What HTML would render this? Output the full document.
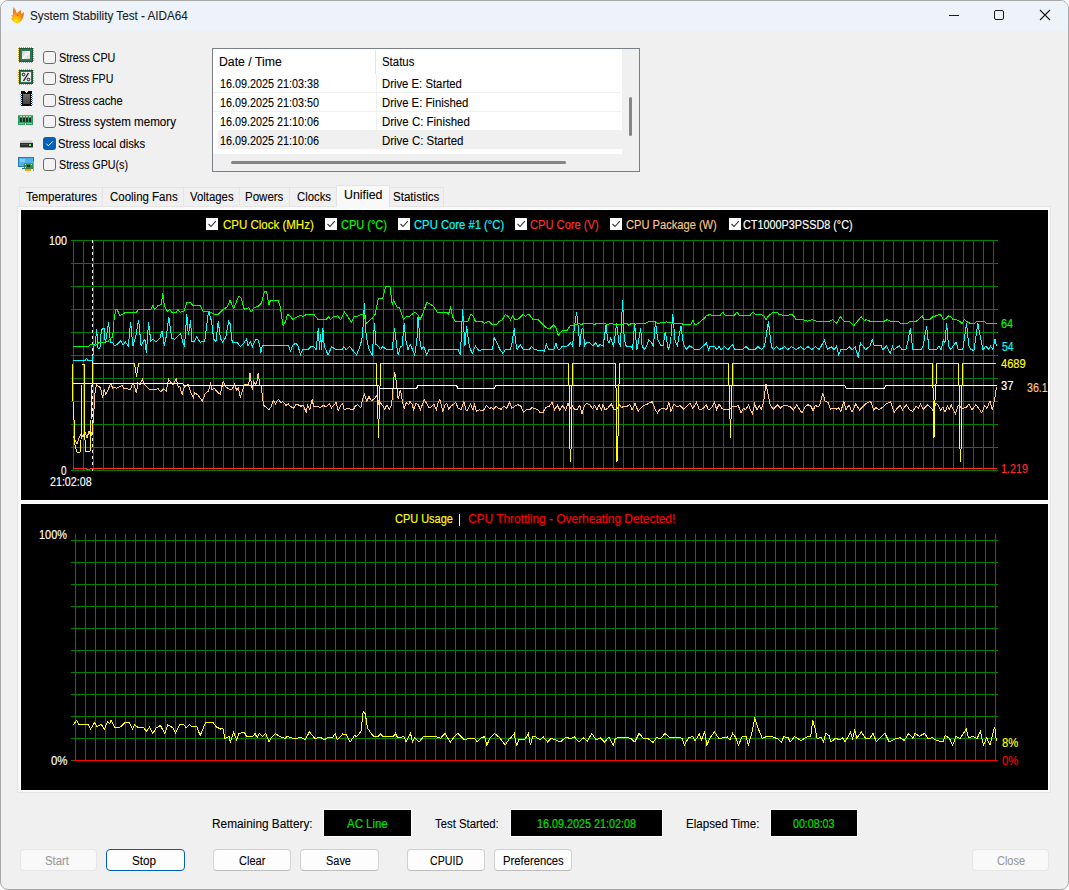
<!DOCTYPE html>
<html><head><meta charset="utf-8">
<style>
html,body{margin:0;padding:0;background:#fff;width:1069px;height:890px;overflow:hidden}
body{font-family:"Liberation Sans",sans-serif;color:#000}
.win{position:absolute;left:0;top:0;width:1069px;height:890px;box-sizing:border-box;border:1px solid #a9a9a9;border-radius:8px;background:#f0f0f0;overflow:hidden}
.in{position:absolute;left:-1px;top:-1px;width:1069px;height:890px}
.t{position:absolute;white-space:nowrap;line-height:1em;-webkit-text-stroke:0.1px currentColor}
.box{position:absolute;background:#000;color:#00e600;font-size:11.5px;display:flex;align-items:center;justify-content:center;box-shadow:0 0 0 1px #fff}
.btn{position:absolute;top:849px;height:22px;box-sizing:border-box;border:1px solid #d0d0d0;border-bottom-color:#bdbdbd;border-radius:4px;background:#fdfdfd;font-size:11.5px;display:flex;align-items:center;justify-content:center}
.btn.dis{background:#f9f9f9;border-color:#e6e6e6;color:#a0a0a0}
.btn.def{border:1.5px solid #005fb8;background:#fdfdfd}
</style></head><body>
<div class="win"><div class="in">
<div style="position:absolute;left:0;top:0;width:1069px;height:31px;background:#eef3f9"></div>
<svg style="position:absolute;left:10px;top:6px" width="16" height="18" viewBox="0 0 16 18">
<defs><radialGradient id="fl" cx="0.4" cy="0.85" r="0.6"><stop offset="0" stop-color="#ffee00"/><stop offset="0.35" stop-color="#ffc000"/><stop offset="0.7" stop-color="#f59020"/><stop offset="1" stop-color="#ec7a18"/></radialGradient></defs>
<path d="M3.5 1 C5 3 6 5 7 7.2 C8 6 9.5 5 10.6 3.8 C11 6 11.3 7 11.6 8.2 C12.3 7.4 13 6.8 14 6 C14 9 13.5 11.5 11.5 14.5 C10 16.5 8 17.5 6 17 C4 16.3 2.5 14.5 1.2 12.5 C1.5 12 2.2 11.5 3 11.2 C2.5 10.5 1.5 10 0.8 9.3 C1.5 9 2.5 9.2 3.2 9.5 C2.8 7 2.8 4 3.5 1 Z" fill="url(#fl)"/>
<circle cx="7.5" cy="9.5" r="0.7" fill="#ff3010"/>
</svg>
<div class="t" style="left:30.02px;top:10.20px;font-size:12px;color:#1b1b1b;transform:scaleX(0.9752);transform-origin:0 0;">System Stability Test - AIDA64</div>
<div style="position:absolute;left:949px;top:15px;width:10px;height:1px;background:#1a1a1a"></div>
<div style="position:absolute;left:994px;top:10px;width:10px;height:10px;box-sizing:border-box;border:1px solid #1a1a1a;border-radius:2px"></div>
<svg style="position:absolute;left:1039px;top:9px" width="12" height="12"><path d="M1 1L11 11M11 1L1 11" stroke="#1a1a1a" stroke-width="1.1"/></svg>
<div style="position:absolute;left:18px;top:47px;line-height:0"><svg width="16" height="16" shape-rendering="crispEdges"><rect x="0" y="0" width="16" height="16" fill="#fafafa"/><rect x="1" y="0" width="1" height="1" fill="#d4a020"/><rect x="1" y="15" width="1" height="1" fill="#d4a020"/><rect x="3" y="0" width="1" height="1" fill="#d4a020"/><rect x="3" y="15" width="1" height="1" fill="#d4a020"/><rect x="5" y="0" width="1" height="1" fill="#d4a020"/><rect x="5" y="15" width="1" height="1" fill="#d4a020"/><rect x="7" y="0" width="1" height="1" fill="#d4a020"/><rect x="7" y="15" width="1" height="1" fill="#d4a020"/><rect x="9" y="0" width="1" height="1" fill="#d4a020"/><rect x="9" y="15" width="1" height="1" fill="#d4a020"/><rect x="11" y="0" width="1" height="1" fill="#d4a020"/><rect x="11" y="15" width="1" height="1" fill="#d4a020"/><rect x="13" y="0" width="1" height="1" fill="#d4a020"/><rect x="13" y="15" width="1" height="1" fill="#d4a020"/><rect x="0" y="1" width="1" height="1" fill="#d4a020"/><rect x="15" y="1" width="1" height="1" fill="#d4a020"/><rect x="0" y="3" width="1" height="1" fill="#d4a020"/><rect x="15" y="3" width="1" height="1" fill="#d4a020"/><rect x="0" y="5" width="1" height="1" fill="#d4a020"/><rect x="15" y="5" width="1" height="1" fill="#d4a020"/><rect x="0" y="7" width="1" height="1" fill="#d4a020"/><rect x="15" y="7" width="1" height="1" fill="#d4a020"/><rect x="0" y="9" width="1" height="1" fill="#d4a020"/><rect x="15" y="9" width="1" height="1" fill="#d4a020"/><rect x="0" y="11" width="1" height="1" fill="#d4a020"/><rect x="15" y="11" width="1" height="1" fill="#d4a020"/><rect x="0" y="13" width="1" height="1" fill="#d4a020"/><rect x="15" y="13" width="1" height="1" fill="#d4a020"/><rect x="1" y="1" width="14" height="14" fill="#1f5a3a"/><rect x="2" y="2" width="12" height="12" fill="#2f7550"/><defs><linearGradient id="cg" x1="0" y1="0" x2="1" y2="1"><stop offset="0" stop-color="#c8c8c8"/><stop offset="0.5" stop-color="#f2f2f2"/><stop offset="1" stop-color="#d0d0d0"/></linearGradient></defs><rect x="4" y="4" width="8" height="8" fill="url(#cg)"/></svg></div>
<div style="position:absolute;left:43px;top:51px;width:13px;height:13px;box-sizing:border-box;border:1px solid #6a6a6a;border-radius:3px;background:#f3f3f3"></div>
<div class="t" style="left:58.50px;top:52.00px;font-size:12px;color:#000;transform:scaleX(0.9000);transform-origin:0 0;">Stress CPU</div>
<div style="position:absolute;left:18px;top:69px;line-height:0"><svg width="16" height="16" shape-rendering="crispEdges"><rect x="0" y="0" width="16" height="16" fill="#fafafa"/><rect x="1" y="0" width="1" height="1" fill="#d4a020"/><rect x="1" y="15" width="1" height="1" fill="#d4a020"/><rect x="3" y="0" width="1" height="1" fill="#d4a020"/><rect x="3" y="15" width="1" height="1" fill="#d4a020"/><rect x="5" y="0" width="1" height="1" fill="#d4a020"/><rect x="5" y="15" width="1" height="1" fill="#d4a020"/><rect x="7" y="0" width="1" height="1" fill="#d4a020"/><rect x="7" y="15" width="1" height="1" fill="#d4a020"/><rect x="9" y="0" width="1" height="1" fill="#d4a020"/><rect x="9" y="15" width="1" height="1" fill="#d4a020"/><rect x="11" y="0" width="1" height="1" fill="#d4a020"/><rect x="11" y="15" width="1" height="1" fill="#d4a020"/><rect x="13" y="0" width="1" height="1" fill="#d4a020"/><rect x="13" y="15" width="1" height="1" fill="#d4a020"/><rect x="0" y="1" width="1" height="1" fill="#d4a020"/><rect x="15" y="1" width="1" height="1" fill="#d4a020"/><rect x="0" y="3" width="1" height="1" fill="#d4a020"/><rect x="15" y="3" width="1" height="1" fill="#d4a020"/><rect x="0" y="5" width="1" height="1" fill="#d4a020"/><rect x="15" y="5" width="1" height="1" fill="#d4a020"/><rect x="0" y="7" width="1" height="1" fill="#d4a020"/><rect x="15" y="7" width="1" height="1" fill="#d4a020"/><rect x="0" y="9" width="1" height="1" fill="#d4a020"/><rect x="15" y="9" width="1" height="1" fill="#d4a020"/><rect x="0" y="11" width="1" height="1" fill="#d4a020"/><rect x="15" y="11" width="1" height="1" fill="#d4a020"/><rect x="0" y="13" width="1" height="1" fill="#d4a020"/><rect x="15" y="13" width="1" height="1" fill="#d4a020"/><rect x="1" y="1" width="14" height="14" fill="#1f5a3a"/><rect x="2" y="2" width="12" height="12" fill="#2f7550"/><rect x="3" y="3" width="10" height="10" fill="#e8e8e8"/><path d="M10.5 4L5.5 12" stroke="#111" stroke-width="1.3" shape-rendering="auto"/><circle cx="5.5" cy="5.5" r="1.3" fill="none" stroke="#111" stroke-width="1" shape-rendering="auto"/><circle cx="10.5" cy="10.5" r="1.3" fill="none" stroke="#111" stroke-width="1" shape-rendering="auto"/></svg></div>
<div style="position:absolute;left:43px;top:72px;width:13px;height:13px;box-sizing:border-box;border:1px solid #6a6a6a;border-radius:3px;background:#f3f3f3"></div>
<div class="t" style="left:58.51px;top:73.20px;font-size:12px;color:#000;transform:scaleX(0.8867);transform-origin:0 0;">Stress FPU</div>
<div style="position:absolute;left:20px;top:91px;line-height:0"><svg width="13" height="16" shape-rendering="crispEdges"><rect x="0" y="1" width="13" height="15" fill="#fafafa"/><path d="M1 0H5L6 2H7L8 0H12V15H1Z" fill="#0a0a0a"/><defs><linearGradient id="kg" x1="0" y1="0" x2="0" y2="1"><stop offset="0" stop-color="#707070"/><stop offset="1" stop-color="#404040"/></linearGradient></defs><rect x="3" y="3" width="7" height="10" fill="url(#kg)"/><rect x="0" y="3" width="1" height="1" fill="#8aa0c8"/><rect x="12" y="3" width="1" height="1" fill="#8aa0c8"/><rect x="1" y="3" width="1" height="1" fill="#fff"/><rect x="11" y="3" width="1" height="1" fill="#fff"/><rect x="0" y="5" width="1" height="1" fill="#8aa0c8"/><rect x="12" y="5" width="1" height="1" fill="#8aa0c8"/><rect x="1" y="5" width="1" height="1" fill="#fff"/><rect x="11" y="5" width="1" height="1" fill="#fff"/><rect x="0" y="7" width="1" height="1" fill="#8aa0c8"/><rect x="12" y="7" width="1" height="1" fill="#8aa0c8"/><rect x="1" y="7" width="1" height="1" fill="#fff"/><rect x="11" y="7" width="1" height="1" fill="#fff"/><rect x="0" y="9" width="1" height="1" fill="#8aa0c8"/><rect x="12" y="9" width="1" height="1" fill="#8aa0c8"/><rect x="1" y="9" width="1" height="1" fill="#fff"/><rect x="11" y="9" width="1" height="1" fill="#fff"/><rect x="0" y="11" width="1" height="1" fill="#8aa0c8"/><rect x="12" y="11" width="1" height="1" fill="#8aa0c8"/><rect x="1" y="11" width="1" height="1" fill="#fff"/><rect x="11" y="11" width="1" height="1" fill="#fff"/><rect x="0" y="13" width="1" height="1" fill="#8aa0c8"/><rect x="12" y="13" width="1" height="1" fill="#8aa0c8"/><rect x="1" y="13" width="1" height="1" fill="#fff"/><rect x="11" y="13" width="1" height="1" fill="#fff"/></svg></div>
<div style="position:absolute;left:43px;top:94px;width:13px;height:13px;box-sizing:border-box;border:1px solid #6a6a6a;border-radius:3px;background:#f3f3f3"></div>
<div class="t" style="left:58.47px;top:95.10px;font-size:12px;color:#000;transform:scaleX(0.9338);transform-origin:0 0;">Stress cache</div>
<div style="position:absolute;left:18px;top:115px;line-height:0"><svg width="15" height="10" shape-rendering="crispEdges"><rect x="0" y="0" width="15" height="10" fill="#2e9a60"/><rect x="0" y="0" width="15" height="1" fill="#48b078"/><rect x="2" y="1" width="2" height="1" fill="#b8e0a0"/><rect x="5" y="1" width="2" height="1" fill="#b8e0a0"/><rect x="8" y="1" width="2" height="1" fill="#b8e0a0"/><rect x="11" y="1" width="2" height="1" fill="#b8e0a0"/><rect x="2" y="3" width="2" height="4" fill="#2a2a2a"/><rect x="5" y="3" width="2" height="4" fill="#2a2a2a"/><rect x="8" y="3" width="2" height="4" fill="#2a2a2a"/><rect x="11" y="3" width="2" height="4" fill="#2a2a2a"/><rect x="1" y="8" width="5" height="1" fill="#f0a030"/><rect x="9" y="8" width="5" height="1" fill="#f0a030"/><rect x="7" y="8" width="1" height="2" fill="#f0f0f0"/></svg></div>
<div style="position:absolute;left:43px;top:115px;width:13px;height:13px;box-sizing:border-box;border:1px solid #6a6a6a;border-radius:3px;background:#f3f3f3"></div>
<div class="t" style="left:58.43px;top:115.90px;font-size:12px;color:#000;transform:scaleX(0.9669);transform-origin:0 0;">Stress system memory</div>
<div style="position:absolute;left:20px;top:140px;line-height:0"><svg width="13" height="8" shape-rendering="crispEdges"><defs><linearGradient id="dg" x1="0" y1="0" x2="0" y2="1"><stop offset="0" stop-color="#e4e4e4"/><stop offset="1" stop-color="#bdbdbd"/></linearGradient></defs><path d="M1 0H12L13 3H0Z" fill="url(#dg)"/><rect x="0" y="3" width="13" height="4" fill="#2c2c2c"/><rect x="1" y="4" width="7" height="1" fill="#505050"/><rect x="9" y="4" width="2" height="2" fill="#4cff4c"/><rect x="0" y="7" width="13" height="1" fill="#9a9a9a"/></svg></div>
<div style="position:absolute;left:43px;top:137px;width:13px;height:13px;box-sizing:border-box;border-radius:3px;background:#005fb8"></div>
<svg style="position:absolute;left:43px;top:137px" width="13" height="13"><path d="M3.2 6.6L5.4 8.8L9.8 4.4" stroke="#fff" stroke-width="1" fill="none"/></svg>
<div class="t" style="left:58.46px;top:137.80px;font-size:12px;color:#000;transform:scaleX(0.9391);transform-origin:0 0;">Stress local disks</div>
<div style="position:absolute;left:18px;top:157px;line-height:0"><svg width="17" height="15" shape-rendering="crispEdges"><rect x="0" y="0" width="16" height="10" fill="#2a78b0"/><rect x="1" y="1" width="14" height="8" fill="#4cb0ee"/><rect x="2" y="2" width="5" height="3" fill="#80ccf6"/><rect x="6" y="6" width="9" height="6" fill="#2f8a50"/><rect x="6" y="6" width="9" height="1" fill="#3fa060"/><rect x="9" y="8" width="3" height="2" fill="#222"/><rect x="7" y="7" width="1" height="1" fill="#ddd"/><rect x="13" y="7" width="1" height="1" fill="#ddd"/><rect x="7" y="10" width="1" height="1" fill="#ddd"/><rect x="7" y="12" width="6" height="2" fill="#f5a000"/><rect x="15" y="4" width="1" height="10" fill="#9a9a9a"/><rect x="4" y="11" width="2" height="1" fill="#3a5aa8"/></svg></div>
<div style="position:absolute;left:43px;top:158px;width:13px;height:13px;box-sizing:border-box;border:1px solid #6a6a6a;border-radius:3px;background:#f3f3f3"></div>
<div class="t" style="left:58.51px;top:159.00px;font-size:12px;color:#000;transform:scaleX(0.8921);transform-origin:0 0;">Stress GPU(s)</div>
<div style="position:absolute;left:212px;top:48px;width:428px;height:124px;box-sizing:border-box;border:1px solid #7a7f86;background:#f0f0f0"></div>
<div style="position:absolute;left:213px;top:49px;width:409px;height:105px;background:#fff"></div>
<div style="position:absolute;left:375px;top:50px;width:1px;height:24px;background:#e5e5e5"></div>
<div style="position:absolute;left:218px;top:130px;width:404px;height:19px;background:#f0f0f0"></div>
<div style="position:absolute;left:213px;top:92px;width:408px;height:1px;background:#f0f0f0"></div>
<div style="position:absolute;left:213px;top:111px;width:408px;height:1px;background:#f0f0f0"></div>
<div style="position:absolute;left:376px;top:74px;width:1px;height:56px;background:#f0f0f0"></div>
<div style="position:absolute;left:629px;top:97px;width:3px;height:39px;background:#858585;border-radius:1.5px"></div>
<div style="position:absolute;left:231px;top:161px;width:335px;height:3px;background:#858585;border-radius:1.5px"></div>
<div class="t" style="left:219.48px;top:56.00px;font-size:12px;color:#000;transform:scaleX(1.0233);transform-origin:0 0;">Date / Time</div>
<div class="t" style="left:381.55px;top:56.00px;font-size:12px;color:#000;transform:scaleX(0.9515);transform-origin:0 0;">Status</div>
<div class="t" style="left:220.20px;top:78.00px;font-size:12px;color:#000;transform:scaleX(0.8982);transform-origin:0 0;">16.09.2025 21:03:38</div>
<div class="t" style="left:381.56px;top:78.00px;font-size:12px;color:#000;transform:scaleX(0.9434);transform-origin:0 0;">Drive E: Started</div>
<div class="t" style="left:220.20px;top:97.00px;font-size:12px;color:#000;transform:scaleX(0.8982);transform-origin:0 0;">16.09.2025 21:03:50</div>
<div class="t" style="left:381.56px;top:97.00px;font-size:12px;color:#000;transform:scaleX(0.9444);transform-origin:0 0;">Drive E: Finished</div>
<div class="t" style="left:220.20px;top:116.00px;font-size:12px;color:#000;transform:scaleX(0.8982);transform-origin:0 0;">16.09.2025 21:10:06</div>
<div class="t" style="left:381.55px;top:116.00px;font-size:12px;color:#000;transform:scaleX(0.9538);transform-origin:0 0;">Drive C: Finished</div>
<div class="t" style="left:220.20px;top:135.00px;font-size:12px;color:#000;transform:scaleX(0.8982);transform-origin:0 0;">16.09.2025 21:10:06</div>
<div class="t" style="left:381.55px;top:135.00px;font-size:12px;color:#000;transform:scaleX(0.9536);transform-origin:0 0;">Drive C: Started</div>
<div style="position:absolute;left:17px;top:206px;width:1034px;height:587px;box-sizing:border-box;border:1px solid #e5e5e5;background:#f9f9f9"></div>
<div style="position:absolute;left:19px;top:187px;width:84px;height:19px;box-sizing:border-box;border:1px solid #e5e5e5;border-bottom:none;background:#f0f0f0"></div>
<div class="t" style="left:25.80px;top:191.00px;font-size:12px;color:#000;transform:scaleX(0.9685);transform-origin:0 0;">Temperatures</div>
<div style="position:absolute;left:102px;top:187px;width:82px;height:19px;box-sizing:border-box;border:1px solid #e5e5e5;border-bottom:none;background:#f0f0f0"></div>
<div class="t" style="left:109.50px;top:191.00px;font-size:12px;color:#000;transform:scaleX(0.9563);transform-origin:0 0;">Cooling Fans</div>
<div style="position:absolute;left:183px;top:187px;width:57px;height:19px;box-sizing:border-box;border:1px solid #e5e5e5;border-bottom:none;background:#f0f0f0"></div>
<div class="t" style="left:190.40px;top:191.00px;font-size:12px;color:#000;transform:scaleX(0.9478);transform-origin:0 0;">Voltages</div>
<div style="position:absolute;left:239px;top:187px;width:51px;height:19px;box-sizing:border-box;border:1px solid #e5e5e5;border-bottom:none;background:#f0f0f0"></div>
<div class="t" style="left:245.34px;top:191.00px;font-size:12px;color:#000;transform:scaleX(0.9590);transform-origin:0 0;">Powers</div>
<div style="position:absolute;left:289px;top:187px;width:48px;height:19px;box-sizing:border-box;border:1px solid #e5e5e5;border-bottom:none;background:#f0f0f0"></div>
<div class="t" style="left:296.70px;top:191.00px;font-size:12px;color:#000;transform:scaleX(0.9444);transform-origin:0 0;">Clocks</div>
<div style="position:absolute;left:336px;top:185px;width:54px;height:22px;box-sizing:border-box;border:1px solid #e5e5e5;border-bottom:none;background:#f9f9f9"></div>
<div class="t" style="left:343.57px;top:189.20px;font-size:12px;color:#000;transform:scaleX(1.0306);transform-origin:0 0;">Unified</div>
<div style="position:absolute;left:389px;top:187px;width:55px;height:19px;box-sizing:border-box;border:1px solid #e5e5e5;border-bottom:none;background:#f0f0f0"></div>
<div class="t" style="left:393.44px;top:191.00px;font-size:12px;color:#000;transform:scaleX(0.9638);transform-origin:0 0;">Statistics</div>
<div style="position:absolute;left:20px;top:209px;width:1029px;height:292px;background:#fff"></div>
<div style="position:absolute;left:21px;top:210px;width:1027px;height:290px;background:#000"></div>
<div style="position:absolute;left:20px;top:503px;width:1029px;height:288px;background:#fff"></div>
<div style="position:absolute;left:21px;top:504px;width:1027px;height:286px;background:#000"></div>
<svg style="position:absolute;left:0;top:0" width="1069" height="890"><path d="M73.5 240V471 M83.5 240V471 M93.5 240V471 M103.5 240V471 M113.5 240V471 M123.5 240V471 M133.5 240V471 M143.5 240V471 M153.5 240V471 M163.5 240V471 M173.5 240V471 M183.5 240V471 M193.5 240V471 M203.5 240V471 M213.5 240V471 M223.5 240V471 M233.5 240V471 M243.5 240V471 M253.5 240V471 M263.5 240V471 M273.5 240V471 M283.5 240V471 M293.5 240V471 M303.5 240V471 M313.5 240V471 M323.5 240V471 M333.5 240V471 M343.5 240V471 M353.5 240V471 M363.5 240V471 M373.5 240V471 M383.5 240V471 M393.5 240V471 M403.5 240V471 M413.5 240V471 M423.5 240V471 M433.5 240V471 M443.5 240V471 M453.5 240V471 M463.5 240V471 M473.5 240V471 M483.5 240V471 M493.5 240V471 M503.5 240V471 M513.5 240V471 M523.5 240V471 M533.5 240V471 M543.5 240V471 M553.5 240V471 M563.5 240V471 M573.5 240V471 M583.5 240V471 M593.5 240V471 M603.5 240V471 M613.5 240V471 M623.5 240V471 M633.5 240V471 M643.5 240V471 M653.5 240V471 M663.5 240V471 M673.5 240V471 M683.5 240V471 M693.5 240V471 M703.5 240V471 M713.5 240V471 M723.5 240V471 M733.5 240V471 M743.5 240V471 M753.5 240V471 M763.5 240V471 M773.5 240V471 M783.5 240V471 M793.5 240V471 M803.5 240V471 M813.5 240V471 M823.5 240V471 M833.5 240V471 M843.5 240V471 M853.5 240V471 M863.5 240V471 M873.5 240V471 M883.5 240V471 M893.5 240V471 M903.5 240V471 M913.5 240V471 M923.5 240V471 M933.5 240V471 M943.5 240V471 M953.5 240V471 M963.5 240V471 M973.5 240V471 M983.5 240V471 M993.5 240V471 M71 240.5H998 M71 263.5H998 M71 286.5H998 M71 309.5H998 M71 332.5H998 M71 355.5H998 M71 378.5H998 M71 401.5H998 M71 424.5H998 M71 447.5H998 M71 470.5H998" stroke="#008000" stroke-width="1" fill="none"/>
<path d="M92.5 240V471" stroke="#fff" stroke-width="1" stroke-dasharray="3 3"/>
<polyline points="73,468.5 85,468.5 88,469.5 92,468.5 997,468.5" stroke="#ff2a2a" stroke-width="1" fill="none" shape-rendering="crispEdges"/>
<polyline points="73.0,436.0 75.0,440.0 77.0,444.0 79.0,438.0 81.0,434.0 83.0,437.0 85.0,432.0 87.0,438.0 89.0,431.0 91.0,436.0 92.5,430.0 93.7,414.4 95.2,390.4 96.7,384.5 99.0,386.7 100.5,387.5 102.7,397.9 104.2,389.0 105.7,394.2 108.0,390.4 109.5,386.0 111.0,383.0 112.5,388.2 114.7,387.5 116.9,388.2 119.9,386.7 122.2,385.2 123.7,388.2 128.2,389.0 130.4,389.7 131.9,385.2 133.4,383.7 134.9,387.5 136.4,393.4 137.9,383.0 140.1,384.5 142.4,379.2 143.9,383.7 146.9,386.7 149.9,389.7 152.9,389.0 155.9,389.7 158.1,388.2 160.4,391.9 163.4,389.0 166.3,391.2 168.6,379.2 170.8,382.2 173.1,385.2 176.1,378.5 178.3,387.5 179.8,386.7 182.1,394.2 184.3,386.7 188.1,384.5 190.3,391.2 193.3,397.9 194.8,392.7 197.8,394.9 202.3,400.9 205.3,393.4 208.3,391.2 210.5,383.7 212.0,389.7 214.3,388.2 217.2,391.9 220.2,394.2 223.2,381.5 225.5,386.7 229.2,389.0 232.2,389.0 234.5,384.5 236.7,390.4 238.2,387.5 240.4,397.2 243.4,387.5 244.9,384.5 248.7,384.5 250.0,373.2 252.2,389.7 253.7,381.5 255.2,384.5 256.7,383.0 258.2,373.2 259.7,384.5 261.2,386.0 263.5,405.4 265.7,406.9 268.7,409.9 271.0,406.9 273.2,400.2 275.4,403.9 276.9,400.9 278.4,399.4 280.7,402.4 282.9,401.7 285.9,405.4 288.2,403.9 290.4,406.2 293.4,408.4 295.7,404.7 297.9,404.7 300.9,406.2 303.1,405.4 304.6,408.4 306.1,412.2 307.6,405.4 309.9,409.2 312.1,399.4 313.6,406.2 317.4,406.2 320.4,407.7 323.4,405.4 326.3,406.9 329.3,403.9 331.6,407.7 333.8,405.4 336.1,402.4 338.3,410.7 340.6,405.4 342.8,403.9 344.3,409.9 347.3,408.4 350.3,409.2 353.3,409.9 355.5,405.4 357.8,404.7 360.8,407.7 363.0,397.9 364.5,394.2 366.8,400.9 369.0,396.4 371.3,400.9 374.3,398.7 377.2,394.9 378.7,403.9 380.2,402.4 382.5,405.4 384.7,409.2 387.0,404.7 389.2,409.2 391.5,405.4 393.0,389.0 394.5,371.7 396.0,380.0 398.2,399.4 400.4,389.7 402.7,402.4 404.2,408.4 406.4,402.4 408.7,404.7 410.0,400.9 412.2,404.7 413.7,409.9 416.0,403.2 418.2,404.7 420.5,409.9 424.2,399.4 426.5,403.2 428.7,407.7 431.0,406.9 434.0,403.9 436.2,409.9 438.4,401.7 439.9,399.4 441.4,406.2 442.9,411.4 445.2,404.7 446.7,403.2 448.9,409.2 451.2,405.4 453.4,404.7 455.7,402.4 457.9,407.7 460.9,409.9 463.9,401.7 466.1,410.7 467.6,409.9 470.6,403.9 472.9,409.9 474.4,404.7 476.6,411.4 479.6,409.9 483.4,410.7 486.3,405.4 489.3,408.4 491.6,407.7 493.8,409.2 496.1,406.2 498.3,408.4 501.3,409.2 503.6,406.2 506.6,408.4 509.6,402.4 511.8,408.4 514.8,406.2 517.8,404.7 520.8,406.2 523.8,412.2 526.8,409.2 529.8,409.9 532.0,407.7 535.0,408.4 538.0,409.9 540.2,412.9 543.2,412.2 545.5,407.7 549.2,406.2 552.2,402.4 554.5,409.9 557.5,405.4 559.7,409.9 562.7,405.4 565.7,409.9 567.9,403.2 570.0,409.2 572.2,405.4 574.5,409.2 576.7,409.9 579.7,405.4 582.0,413.7 584.2,406.2 586.5,403.2 589.5,404.7 592.5,408.4 594.7,405.4 596.9,409.9 599.2,404.7 601.4,409.9 602.9,404.7 605.2,409.9 608.2,407.7 611.2,403.9 614.2,409.9 617.2,408.4 619.4,404.7 621.6,407.7 623.9,406.2 626.1,406.9 629.9,404.7 632.1,409.9 635.1,403.2 638.1,411.4 640.4,408.4 643.4,405.4 646.3,404.7 648.6,403.2 652.3,401.7 655.3,409.9 657.6,412.9 659.8,409.2 664.3,408.4 666.6,409.9 668.8,402.4 671.0,411.4 674.0,403.9 677.0,406.9 680.0,405.4 683.8,409.2 686.8,406.2 689.8,403.2 692.8,408.4 696.5,402.4 699.5,409.9 703.2,408.4 706.2,404.7 708.5,409.9 711.5,407.7 714.5,402.4 716.7,409.9 719.0,403.9 721.9,408.4 724.9,409.9 727.9,409.9 730.0,409.2 733.0,406.2 736.0,406.9 738.2,405.4 741.2,412.9 743.5,408.4 745.7,409.9 748.7,404.7 750.2,409.9 752.5,413.7 754.7,403.9 756.9,409.9 759.2,405.4 761.4,409.2 763.7,401.7 765.9,383.7 768.2,394.9 770.4,405.4 773.4,409.2 775.7,406.9 777.9,404.7 780.1,408.4 782.4,406.2 785.4,405.4 788.4,406.2 790.6,406.9 793.6,409.9 796.6,404.7 798.9,408.4 801.9,412.9 804.9,406.9 807.8,404.7 810.8,406.2 813.1,410.7 815.3,405.4 818.3,406.9 819.8,404.7 822.8,393.4 825.1,400.9 828.1,402.4 830.3,409.2 833.3,408.4 836.3,409.2 838.5,407.7 840.8,411.4 843.8,401.7 846.0,409.9 849.0,404.7 852.0,412.2 855.7,403.9 859.5,409.9 863.2,406.2 865.5,403.9 867.7,402.4 870.7,401.7 873.7,409.9 876.0,407.7 878.2,409.2 880.0,409.2 883.0,406.9 886.0,403.9 890.5,401.7 894.2,412.2 897.2,408.4 900.2,405.4 902.5,409.9 906.2,404.7 909.9,409.9 912.9,411.4 915.9,406.2 918.2,408.4 920.4,403.9 923.4,409.2 925.7,406.9 927.9,404.7 930.9,407.7 933.1,410.7 936.1,403.2 938.4,405.4 940.6,409.9 942.9,406.9 945.1,412.2 947.4,406.2 949.6,409.2 951.1,404.7 953.4,409.9 955.6,413.7 957.8,406.2 959.3,404.7 961.6,409.2 964.6,407.7 966.8,406.9 969.1,403.9 972.1,409.9 975.8,404.7 978.8,408.4 981.8,412.9 984.8,405.4 987.0,408.4 990.0,400.9 992.3,409.9 994.5,400.2 996.0,390.4 996.8,387.5" stroke="#ffc880" stroke-width="1" fill="none" shape-rendering="crispEdges"/>
<polyline points="73.0,383.7 182.8,383.7 183.5,385.2 378.7,385.2 379.5,388.2 416.7,388.2 418.2,385.2 456.4,385.2 457.9,388.2 494.6,388.2 496.1,385.2 844.5,385.2 846.0,388.2 884.5,388.2 886.0,385.2 996.8,385.2" stroke="#ffffff" stroke-width="1" fill="none" shape-rendering="crispEdges"/>
<polyline points="72.0,364.0 72.0,382.0 74.0,420.0 75.0,445.0 77.0,452.0 80.0,452.0 81.0,440.0 82.0,385.0 82.0,364.0 84.0,364.0 84.0,385.0 85.0,440.0 86.0,452.0 90.0,451.0 91.0,420.0 92.0,385.0 92.5,363.5 134.5,363.5 136.5,376.5 138.5,363.5 376.5,363.5 376.5,384.0 377.5,388.0 377.5,400.0 378.5,437.8 379.5,400.0 379.5,388.0 380.5,384.0 380.5,363.5 568.5,363.5 568.5,384.0 569.5,388.0 569.5,436.0 570.5,462.0 571.5,436.0 571.5,388.0 572.5,384.0 572.5,363.5 615.0,363.5 615.0,384.0 616.0,388.0 616.0,436.0 617.0,462.0 618.0,436.0 618.0,388.0 619.0,384.0 619.0,363.5 728.5,363.5 728.5,384.0 729.5,388.0 729.5,400.0 730.5,437.8 731.5,400.0 731.5,388.0 732.5,384.0 732.5,363.5 932.0,363.5 932.0,384.0 933.0,388.0 933.0,400.0 934.0,437.8 935.0,400.0 935.0,388.0 936.0,384.0 936.0,363.5 958.5,363.5 958.5,384.0 959.5,388.0 959.5,436.0 960.5,462.0 961.5,436.0 961.5,388.0 962.5,384.0 962.5,363.5 996.0,363.5" stroke="#ffff00" stroke-width="1" fill="none" shape-rendering="crispEdges"/>
<polyline points="73.0,360.5 85.0,360.5 86.5,358.6 88.0,360.5 92.5,360.5 94.0,345.9 95.4,342.9 96.6,328.7 98.1,348.9 99.9,348.9 100.7,335.4 102.2,328.7 104.4,328.7 105.2,342.9 106.7,335.4 108.6,321.9 110.4,342.9 112.7,342.9 114.9,345.9 117.9,343.6 120.9,340.6 123.1,345.1 125.4,342.1 128.4,345.9 130.6,321.9 132.9,345.9 135.9,336.1 138.6,319.7 141.1,345.9 143.4,341.4 144.9,339.1 146.3,353.4 148.6,321.9 150.8,341.4 153.1,339.1 156.1,342.1 159.8,338.4 162.1,330.9 164.3,345.9 166.6,334.6 168.8,316.7 171.8,338.4 174.8,339.1 177.8,336.1 180.8,333.9 183.0,342.9 184.5,345.9 186.8,314.4 188.3,335.4 190.5,320.4 192.0,341.4 194.3,341.4 196.5,336.9 200.2,342.1 204.7,341.4 208.5,310.7 211.5,321.2 213.7,339.1 216.0,341.4 218.2,321.2 220.4,338.4 222.7,342.1 225.7,337.6 228.7,321.2 230.0,323.4 232.2,342.1 237.5,342.9 240.5,346.6 243.5,343.6 246.5,339.1 248.0,345.9 250.2,341.4 252.5,346.6 255.4,339.9 257.7,339.1 259.9,345.9 260.7,353.4 262.2,345.9 288.4,345.9 290.6,351.1 292.9,345.1 295.9,342.9 298.1,345.9 300.4,354.9 302.6,349.6 307.8,349.6 310.8,346.6 313.1,345.9 316.1,349.6 318.3,327.9 319.5,349.6 320.6,333.9 321.6,349.6 322.8,327.9 324.3,346.6 328.1,354.9 331.8,346.6 335.5,349.6 342.3,349.6 343.8,346.6 346.0,349.6 349.8,346.6 356.5,354.9 360.2,345.9 362.5,336.1 364.4,303.2 366.2,336.9 369.2,349.6 372.2,354.9 374.5,323.4 376.0,344.4 378.2,345.9 380.4,349.6 382.7,346.6 385.7,348.9 390.0,349.6 392.2,349.6 394.5,327.9 396.7,345.9 398.2,354.9 400.5,346.6 402.0,345.9 404.2,323.4 405.7,339.9 408.0,349.6 410.2,344.4 412.5,349.6 414.7,354.9 416.9,340.6 418.1,315.2 419.9,340.6 421.4,349.6 423.7,346.6 426.7,354.9 428.9,349.6 458.1,349.6 460.4,354.9 462.6,309.2 464.9,345.9 466.6,326.4 469.3,346.6 472.3,353.4 475.3,345.9 479.1,351.1 481.3,349.6 492.5,349.6 494.0,337.6 497.0,342.9 500.0,349.6 503.0,353.4 505.3,349.6 510.5,349.6 512.0,342.9 514.3,327.9 515.7,342.9 517.2,349.6 520.2,344.4 523.2,349.6 529.2,349.6 531.5,346.6 534.5,349.6 544.2,351.1 546.4,344.4 548.7,349.6 550.0,349.6 553.7,349.6 556.0,342.9 557.5,348.9 559.7,349.6 562.0,346.6 568.0,345.9 570.2,342.9 572.5,345.9 574.7,324.9 576.6,312.2 578.4,327.9 579.9,346.6 581.4,329.4 582.9,327.9 584.7,345.9 586.7,342.1 589.7,342.9 592.7,345.9 595.7,342.9 597.9,346.6 600.1,344.4 603.1,345.9 606.1,324.9 607.6,339.9 609.1,342.9 610.6,338.4 613.6,346.6 616.6,323.4 618.9,342.9 620.4,345.9 622.6,300.2 624.1,335.4 625.6,345.9 631.6,346.6 632.6,349.6 634.6,323.4 636.8,349.6 638.3,342.9 640.6,327.9 642.1,345.9 644.3,349.6 646.6,345.9 648.8,339.9 651.8,342.9 653.3,346.6 655.5,321.9 657.8,339.9 660.8,345.9 663.0,345.9 665.3,331.6 668.3,349.6 670.5,342.9 672.8,314.4 675.0,339.9 677.2,345.9 681.0,325.7 683.2,342.9 686.2,349.6 689.2,345.9 692.2,347.4 694.5,349.6 699.0,349.6 703.4,345.9 706.4,342.9 708.7,349.6 710.0,346.6 714.5,346.6 716.7,349.6 719.0,346.6 721.2,349.6 724.2,346.6 728.0,349.6 732.5,344.4 734.7,349.6 742.2,349.6 745.9,346.6 748.9,349.6 754.9,349.6 757.9,346.6 761.6,349.6 764.6,345.9 768.4,321.2 771.4,346.6 773.6,349.6 776.6,346.6 779.6,349.6 784.9,346.6 787.8,349.6 791.6,346.6 796.1,349.6 800.6,346.6 804.3,349.6 808.1,346.6 811.8,349.6 815.5,346.6 819.3,349.6 824.5,339.9 827.5,349.6 831.3,346.6 834.3,349.6 836.5,345.9 838.7,354.9 841.0,349.6 846.2,349.6 849.2,346.6 852.2,349.6 855.2,346.6 858.2,357.8 860.4,342.9 862.7,345.9 865.7,349.6 870.0,345.9 872.2,339.9 874.5,345.9 881.2,345.9 882.7,349.6 886.5,345.9 890.2,353.4 892.5,346.6 894.0,349.6 899.2,345.9 902.2,349.6 905.9,349.6 908.2,339.9 910.4,327.9 912.7,349.6 920.9,349.6 923.1,345.9 926.6,326.4 929.1,349.6 936.6,349.6 938.9,345.9 941.1,349.6 943.4,339.9 944.9,342.9 946.6,323.4 948.6,346.6 950.8,349.6 953.1,345.9 956.1,342.1 958.3,349.6 962.8,349.6 966.6,323.4 968.8,345.9 971.0,349.6 974.0,350.4 977.8,323.4 980.8,339.1 983.0,349.6 986.0,345.9 988.3,349.6 990.5,345.9 992.8,349.6 995.0,339.1 996.5,345.9" stroke="#00ffff" stroke-width="1" fill="none" shape-rendering="crispEdges"/>
<polyline points="73.0,346.2 88.7,346.2 91.0,344.4 93.2,344.1 95.4,345.9 97.7,343.6 99.9,342.1 104.4,342.1 108.2,341.4 110.4,338.4 112.7,336.9 114.2,318.2 115.7,309.9 117.2,309.9 120.1,315.9 123.1,313.7 126.1,312.2 136.6,312.2 138.1,309.9 150.8,309.2 153.1,305.4 154.6,309.2 158.3,305.4 161.3,304.7 162.8,293.5 164.3,305.4 167.3,311.4 169.6,309.2 171.8,312.2 176.3,312.2 177.8,309.2 180.0,312.2 183.8,311.4 186.8,302.5 190.5,302.5 192.8,305.4 200.2,305.4 203.2,311.4 207.7,311.4 210.7,312.2 214.5,314.4 218.2,314.4 222.7,309.9 227.2,306.9 229.4,302.5 230.0,300.2 233.7,308.4 236.7,301.0 239.0,296.2 241.2,298.0 244.2,309.2 247.2,308.4 248.7,307.7 251.0,312.2 254.0,307.7 258.4,306.2 261.4,303.2 264.4,291.2 266.7,292.0 268.9,305.4 270.4,300.2 277.9,300.2 280.1,306.2 283.1,325.7 285.4,321.9 287.6,314.4 289.9,315.9 292.9,319.7 295.9,317.4 300.4,315.2 303.4,316.7 306.3,314.4 313.8,314.4 318.3,319.7 325.8,319.7 328.8,316.7 330.3,319.7 333.3,316.7 337.8,315.9 340.8,319.7 344.5,312.2 348.3,317.4 351.3,321.9 354.3,316.7 358.7,315.9 361.0,314.4 364.0,314.4 366.2,323.4 372.2,318.2 375.2,314.4 378.2,298.7 382.7,298.0 385.7,286.7 390.0,286.7 392.2,304.7 393.7,300.2 396.7,306.9 399.7,307.7 403.5,319.7 406.5,316.7 410.2,315.9 414.7,312.2 417.7,314.4 419.9,319.7 422.9,313.7 426.7,302.5 428.9,303.2 433.4,306.2 437.2,312.2 446.9,312.2 448.4,314.4 450.6,307.7 452.9,317.4 455.1,321.2 467.8,321.2 470.8,314.4 473.1,315.9 475.3,321.2 481.3,321.2 484.3,323.4 488.1,321.2 489.6,321.9 492.5,324.9 496.3,324.9 499.3,321.2 502.3,319.7 505.3,314.4 508.3,316.7 510.5,319.7 512.8,315.9 515.0,319.7 518.7,318.9 523.2,314.4 525.5,316.7 527.7,314.4 530.0,315.2 533.0,319.7 538.2,319.7 541.2,322.7 543.4,324.9 546.4,327.9 550.0,328.7 553.7,324.9 556.0,327.9 558.2,335.4 561.2,331.6 563.5,330.1 567.2,330.1 570.2,325.7 574.7,324.9 579.2,323.4 580.7,324.9 583.7,323.4 591.9,323.4 594.2,324.9 596.4,323.4 605.4,323.4 607.6,324.9 609.9,323.4 617.4,324.9 627.1,323.4 628.6,324.9 631.6,323.4 634.6,324.2 639.8,323.4 645.8,323.4 648.8,321.2 654.8,321.2 657.8,323.4 666.8,321.9 674.3,323.4 681.7,323.4 683.2,324.9 690.7,324.9 693.0,319.7 694.5,324.9 698.2,323.4 702.7,319.7 706.4,315.9 710.0,314.4 712.2,315.9 719.7,315.9 722.7,312.2 725.7,315.9 734.0,315.9 736.9,312.2 739.9,315.9 749.7,315.9 752.7,312.2 755.7,314.4 760.9,314.4 763.9,315.9 766.1,319.7 768.4,315.9 772.9,312.2 777.4,312.2 778.9,314.4 786.3,315.9 790.8,314.4 793.1,315.2 796.1,319.7 803.6,319.7 807.3,321.2 812.5,319.7 816.3,321.2 829.8,321.2 832.8,319.7 836.5,323.4 840.2,316.7 844.0,321.2 850.0,321.9 853.7,325.7 858.2,320.4 861.2,316.7 864.2,320.4 866.4,319.7 870.0,321.2 884.2,321.2 887.2,319.7 890.2,321.2 897.7,321.2 900.7,323.4 907.4,323.4 910.4,321.2 916.4,321.2 919.4,318.9 922.4,315.9 923.9,319.7 929.9,319.7 932.9,316.7 935.9,315.9 938.9,314.4 941.1,315.2 943.4,319.7 945.6,318.9 948.6,315.9 950.8,316.7 953.1,319.7 956.8,319.7 960.6,321.9 962.1,323.4 964.3,319.7 967.3,321.9 970.3,323.4 974.8,323.4 977.0,321.2 983.8,321.2 986.8,323.4 996.5,323.4" stroke="#00ff00" stroke-width="1" fill="none" shape-rendering="crispEdges"/>
<path d="M75.5 534V760 M85.5 534V760 M95.5 534V760 M105.5 534V760 M115.5 534V760 M125.5 534V760 M135.5 534V760 M145.5 534V760 M155.5 534V760 M165.5 534V760 M175.5 534V760 M185.5 534V760 M195.5 534V760 M205.5 534V760 M215.5 534V760 M225.5 534V760 M235.5 534V760 M245.5 534V760 M255.5 534V760 M265.5 534V760 M275.5 534V760 M285.5 534V760 M295.5 534V760 M305.5 534V760 M315.5 534V760 M325.5 534V760 M335.5 534V760 M345.5 534V760 M355.5 534V760 M365.5 534V760 M375.5 534V760 M385.5 534V760 M395.5 534V760 M405.5 534V760 M415.5 534V760 M425.5 534V760 M435.5 534V760 M445.5 534V760 M455.5 534V760 M465.5 534V760 M475.5 534V760 M485.5 534V760 M495.5 534V760 M505.5 534V760 M515.5 534V760 M525.5 534V760 M535.5 534V760 M545.5 534V760 M555.5 534V760 M565.5 534V760 M575.5 534V760 M585.5 534V760 M595.5 534V760 M605.5 534V760 M615.5 534V760 M625.5 534V760 M635.5 534V760 M645.5 534V760 M655.5 534V760 M665.5 534V760 M675.5 534V760 M685.5 534V760 M695.5 534V760 M705.5 534V760 M715.5 534V760 M725.5 534V760 M735.5 534V760 M745.5 534V760 M755.5 534V760 M765.5 534V760 M775.5 534V760 M785.5 534V760 M795.5 534V760 M805.5 534V760 M815.5 534V760 M825.5 534V760 M835.5 534V760 M845.5 534V760 M855.5 534V760 M865.5 534V760 M875.5 534V760 M885.5 534V760 M895.5 534V760 M905.5 534V760 M915.5 534V760 M925.5 534V760 M935.5 534V760 M945.5 534V760 M955.5 534V760 M965.5 534V760 M975.5 534V760 M985.5 534V760 M995.5 534V760 M71 540.5H998 M71 562.5H998 M71 584.5H998 M71 606.5H998 M71 628.5H998 M71 650.5H998 M71 672.5H998 M71 694.5H998 M71 716.5H998 M71 738.5H998 M71 760.5H998" stroke="#008000" stroke-width="1" fill="none"/>
<path d="M73 760.5H998" stroke="#ff0000" stroke-width="1" shape-rendering="crispEdges"/>
<polyline points="73.2,724.8 76.5,720.4 78.6,724.1 88.3,724.1 90.4,729.1 94.7,722.6 96.9,726.9 101.2,724.1 104.4,729.1 107.7,721.5 109.8,723.7 110.9,720.4 115.2,728.0 120.6,726.9 124.9,722.6 129.2,722.6 132.4,729.1 134.5,724.8 138.8,728.0 143.1,726.9 146.4,731.2 149.6,726.9 152.8,733.4 156.1,728.0 160.4,725.4 164.7,733.4 167.9,724.8 173.3,728.0 175.4,733.4 179.7,724.8 184.0,724.8 186.2,728.0 189.4,724.8 192.6,726.9 196.9,726.9 200.2,735.5 205.5,722.6 213.1,722.6 216.3,726.9 220.6,729.1 222.8,728.0 224.9,738.7 229.2,736.6 230.3,742.0 233.5,732.3 236.7,739.8 238.9,733.4 244.3,732.3 246.4,736.2 252.9,736.2 255.0,733.4 257.2,737.7 259.3,733.4 262.6,736.6 265.8,733.4 269.0,742.0 271.2,737.7 275.5,733.4 279.8,736.6 285.1,738.3 287.3,736.2 290.0,737.7 296.5,738.7 300.8,737.0 305.1,739.8 309.4,731.9 312.6,735.5 314.7,738.7 320.1,737.0 324.4,739.8 328.7,737.0 333.0,737.0 335.2,733.4 337.3,739.8 342.7,734.0 345.9,734.4 350.2,742.0 354.5,735.5 356.7,736.6 361.0,731.2 363.1,711.8 365.3,714.0 367.5,728.0 371.8,734.4 373.9,736.6 378.2,736.6 380.4,734.0 382.5,736.2 384.7,736.6 393.3,736.6 395.4,733.4 397.6,737.7 404.0,736.6 406.2,742.0 410.5,733.4 412.6,742.0 414.8,737.7 419.1,742.0 423.4,736.6 436.3,736.6 440.6,738.3 444.9,733.4 450.3,742.0 453.5,737.7 457.8,733.4 464.3,739.8 468.6,738.7 475.0,738.7 477.2,742.0 481.5,737.7 484.7,736.6 486.9,745.2 490.1,737.7 494.4,733.4 499.8,737.7 505.1,745.2 509.4,738.7 510.0,738.7 514.3,733.4 516.5,746.3 518.6,739.8 525.1,739.2 528.3,733.4 530.4,745.2 532.6,736.6 535.8,737.0 540.1,739.8 543.3,737.0 547.7,742.0 550.9,738.3 555.2,739.8 560.6,742.0 565.9,737.0 570.2,738.7 574.5,737.0 578.8,742.0 583.1,737.7 587.5,740.9 591.8,733.4 596.1,739.8 600.4,737.7 604.7,742.0 609.0,737.0 613.3,745.2 615.4,738.3 621.9,737.0 630.5,738.3 634.8,742.0 639.1,733.4 643.4,738.3 647.7,738.3 653.1,742.6 656.3,737.7 660.6,738.7 664.9,733.4 669.2,737.0 677.8,737.0 682.1,738.3 684.3,745.2 688.6,737.7 692.9,736.6 695.0,740.9 699.3,734.0 701.5,739.8 704.7,731.9 706.9,745.2 710.1,737.7 714.4,731.9 718.7,738.3 725.1,737.7 727.3,737.0 730.0,739.8 732.6,733.4 735.4,737.0 738.6,745.2 741.8,737.0 746.1,736.6 748.3,745.2 751.5,734.4 754.7,718.3 758.0,728.0 762.3,738.3 766.6,736.6 773.0,737.0 777.3,738.7 781.6,742.0 783.8,736.6 788.1,737.7 790.2,742.0 794.5,736.6 801.0,740.5 807.5,736.6 810.7,736.6 812.8,720.4 815.0,728.0 817.1,738.3 821.4,737.7 823.6,742.0 825.7,733.4 829.0,735.5 831.1,742.0 835.4,738.3 839.7,739.8 843.0,737.7 845.1,742.0 850.5,732.3 852.6,738.3 854.8,730.1 856.9,738.3 861.2,731.9 865.5,738.3 869.8,738.3 873.1,733.4 876.3,742.0 882.8,735.5 884.9,733.4 889.2,742.0 895.7,738.7 900.0,737.7 904.3,740.5 908.6,733.4 912.9,738.3 915.0,733.4 919.3,736.2 924.7,733.4 927.9,738.7 932.2,737.7 936.5,740.5 943.0,742.0 945.1,735.5 949.4,738.3 952.7,745.2 955.9,736.6 960.0,738.7 964.1,732.3 966.3,729.1 968.5,737.7 972.8,736.6 977.1,738.7 980.3,731.2 983.5,745.2 986.7,737.7 990.0,745.2 993.2,732.3 994.7,726.9 996.4,740.9" stroke="#ffff00" stroke-width="1" fill="none" shape-rendering="crispEdges"/></svg>
<div style="position:absolute;left:206px;top:218px;width:12px;height:12px;background:#fff"></div>
<svg style="position:absolute;left:206px;top:218px" width="12" height="12"><path d="M2.5 6L5 8.5L9.8 3.2" stroke="#333" stroke-width="1.1" fill="none"/></svg>
<div class="t" style="left:223.30px;top:219.00px;font-size:12px;color:#ffff00;transform:scaleX(0.9585);transform-origin:0 0;-webkit-text-stroke:0.15px currentColor;">CPU Clock (MHz)</div>
<div style="position:absolute;left:325px;top:218px;width:12px;height:12px;background:#fff"></div>
<svg style="position:absolute;left:325px;top:218px" width="12" height="12"><path d="M2.5 6L5 8.5L9.8 3.2" stroke="#333" stroke-width="1.1" fill="none"/></svg>
<div class="t" style="left:340.70px;top:219.00px;font-size:12px;color:#00ff00;transform:scaleX(0.9160);transform-origin:0 0;-webkit-text-stroke:0.15px currentColor;">CPU (°C)</div>
<div style="position:absolute;left:398px;top:218px;width:12px;height:12px;background:#fff"></div>
<svg style="position:absolute;left:398px;top:218px" width="12" height="12"><path d="M2.5 6L5 8.5L9.8 3.2" stroke="#333" stroke-width="1.1" fill="none"/></svg>
<div class="t" style="left:413.50px;top:219.00px;font-size:12px;color:#00ffff;transform:scaleX(0.9375);transform-origin:0 0;-webkit-text-stroke:0.15px currentColor;">CPU Core #1 (°C)</div>
<div style="position:absolute;left:515px;top:218px;width:12px;height:12px;background:#fff"></div>
<svg style="position:absolute;left:515px;top:218px" width="12" height="12"><path d="M2.5 6L5 8.5L9.8 3.2" stroke="#333" stroke-width="1.1" fill="none"/></svg>
<div class="t" style="left:530.30px;top:219.00px;font-size:12px;color:#ff3030;transform:scaleX(0.9284);transform-origin:0 0;-webkit-text-stroke:0.15px currentColor;">CPU Core (V)</div>
<div style="position:absolute;left:610px;top:218px;width:12px;height:12px;background:#fff"></div>
<svg style="position:absolute;left:610px;top:218px" width="12" height="12"><path d="M2.5 6L5 8.5L9.8 3.2" stroke="#333" stroke-width="1.1" fill="none"/></svg>
<div class="t" style="left:626.20px;top:219.00px;font-size:12px;color:#ffc880;transform:scaleX(0.9265);transform-origin:0 0;-webkit-text-stroke:0.15px currentColor;">CPU Package (W)</div>
<div style="position:absolute;left:729px;top:218px;width:12px;height:12px;background:#fff"></div>
<svg style="position:absolute;left:729px;top:218px" width="12" height="12"><path d="M2.5 6L5 8.5L9.8 3.2" stroke="#333" stroke-width="1.1" fill="none"/></svg>
<div class="t" style="left:743.10px;top:219.00px;font-size:12px;color:#ffffff;transform:scaleX(0.9017);transform-origin:0 0;-webkit-text-stroke:0.15px currentColor;">CT1000P3PSSD8 (°C)</div>
<div class="t" style="left:48.91px;top:235.00px;font-size:12px;color:#ffffff;transform:scaleX(0.8947);transform-origin:0 0;-webkit-text-stroke:0.15px currentColor;">100</div>
<div class="t" style="left:61.00px;top:465.00px;font-size:12px;color:#ffffff;transform:scaleX(0.8286);transform-origin:0 0;-webkit-text-stroke:0.15px currentColor;">0</div>
<div class="t" style="left:50.10px;top:476.00px;font-size:12px;color:#ffffff;transform:scaleX(0.8915);transform-origin:0 0;-webkit-text-stroke:0.15px currentColor;">21:02:08</div>
<div class="t" style="left:1001.30px;top:318.00px;font-size:12px;color:#00ff00;transform:scaleX(0.9000);transform-origin:0 0;-webkit-text-stroke:0.15px currentColor;">64</div>
<div class="t" style="left:1001.70px;top:341.00px;font-size:12px;color:#00ffff;transform:scaleX(0.8692);transform-origin:0 0;-webkit-text-stroke:0.15px currentColor;">54</div>
<div class="t" style="left:1001.00px;top:358.00px;font-size:12px;color:#ffff00;transform:scaleX(0.9192);transform-origin:0 0;-webkit-text-stroke:0.15px currentColor;">4689</div>
<div class="t" style="left:1001.00px;top:380.00px;font-size:12px;color:#ffffff;transform:scaleX(0.9385);transform-origin:0 0;-webkit-text-stroke:0.15px currentColor;">37</div>
<div class="t" style="left:1001.00px;top:463.00px;font-size:12px;color:#ff2a2a;transform:scaleX(0.9034);transform-origin:0 0;-webkit-text-stroke:0.15px currentColor;">1.219</div>
<div class="t" style="left:394.60px;top:513.20px;font-size:12px;color:#ffff00;transform:scaleX(0.9127);transform-origin:0 0;-webkit-text-stroke:0.15px currentColor;">CPU Usage</div>
<div class="t" style="left:467.90px;top:513.20px;font-size:12px;color:#ff0000;transform:scaleX(0.9904);transform-origin:0 0;-webkit-text-stroke:0.15px currentColor;">CPU Throttling - Overheating Detected!</div>
<div class="t" style="left:38.89px;top:529.00px;font-size:12px;color:#ffffff;transform:scaleX(0.9133);transform-origin:0 0;-webkit-text-stroke:0.15px currentColor;">100%</div>
<div class="t" style="left:51.00px;top:755.00px;font-size:12px;color:#ffffff;transform:scaleX(0.9529);transform-origin:0 0;-webkit-text-stroke:0.15px currentColor;">0%</div>
<div class="t" style="left:1001.50px;top:737.00px;font-size:12px;color:#ffff00;transform:scaleX(0.9353);transform-origin:0 0;-webkit-text-stroke:0.15px currentColor;">8%</div>
<div class="t" style="left:1001.50px;top:755.00px;font-size:12px;color:#ff0000;transform:scaleX(0.9353);transform-origin:0 0;-webkit-text-stroke:0.15px currentColor;">0%</div>
<div style="position:absolute;left:459px;top:514px;width:1px;height:12px;background:#fff"></div>
<div style="position:absolute;left:1020px;top:370px;width:28px;height:30px;overflow:hidden"><div style="position:absolute;left:-1020px;top:-370px"><div class="t" style="left:1027.10px;top:382.00px;font-size:12px;color:#ffc880;transform:scaleX(0.8870);transform-origin:0 0;-webkit-text-stroke:0.15px currentColor;">36.1</div></div></div>
<div class="box" style="left:324px;top:810px;width:87px;height:26px"></div>
<div class="box" style="left:511px;top:810px;width:151px;height:26px"></div>
<div class="box" style="left:771px;top:810px;width:86px;height:26px"></div>
<div class="t" style="left:211.61px;top:817.80px;font-size:12px;color:#000;transform:scaleX(0.9860);transform-origin:0 0;">Remaining Battery:</div>
<div class="t" style="left:347.00px;top:818.00px;font-size:12px;color:#00e000;transform:scaleX(0.9535);transform-origin:0 0;-webkit-text-stroke:0.15px currentColor;">AC Line</div>
<div class="t" style="left:435.30px;top:817.80px;font-size:12px;color:#000;transform:scaleX(0.9448);transform-origin:0 0;">Test Started:</div>
<div class="t" style="left:537.00px;top:818.00px;font-size:12px;color:#00e000;transform:scaleX(0.9000);transform-origin:0 0;-webkit-text-stroke:0.15px currentColor;">16.09.2025 21:02:08</div>
<div class="t" style="left:685.84px;top:818.00px;font-size:12px;color:#000;transform:scaleX(0.9649);transform-origin:0 0;">Elapsed Time:</div>
<div class="t" style="left:792.90px;top:818.00px;font-size:12px;color:#00e000;transform:scaleX(0.8872);transform-origin:0 0;-webkit-text-stroke:0.15px currentColor;">00:08:03</div>
<div class="btn dis" style="left:20px;width:77px"></div>
<div class="btn def" style="left:106px;width:79px"></div>
<div class="btn " style="left:213px;width:78px"></div>
<div class="btn " style="left:300px;width:79px"></div>
<div class="btn " style="left:407px;width:78px"></div>
<div class="btn " style="left:494px;width:78px"></div>
<div class="btn dis" style="left:972px;width:77px"></div>
<div class="t" style="left:45.15px;top:855.20px;font-size:12px;color:#9a9a9a;transform:scaleX(0.9480);transform-origin:0 0;">Start</div>
<div class="t" style="left:132.12px;top:855.20px;font-size:12px;color:#000;transform:scaleX(0.9750);transform-origin:0 0;">Stop</div>
<div class="t" style="left:239.30px;top:855.20px;font-size:12px;color:#000;transform:scaleX(0.9172);transform-origin:0 0;">Clear</div>
<div class="t" style="left:326.39px;top:855.20px;font-size:12px;color:#000;transform:scaleX(0.9115);transform-origin:0 0;">Save</div>
<div class="t" style="left:429.50px;top:855.20px;font-size:12px;color:#000;transform:scaleX(0.8865);transform-origin:0 0;">CPUID</div>
<div class="t" style="left:502.56px;top:855.20px;font-size:12px;color:#000;transform:scaleX(0.9391);transform-origin:0 0;">Preferences</div>
<div class="t" style="left:996.50px;top:855.20px;font-size:12px;color:#9a9a9a;transform:scaleX(0.9129);transform-origin:0 0;">Close</div>
</div></div>
</body></html>
